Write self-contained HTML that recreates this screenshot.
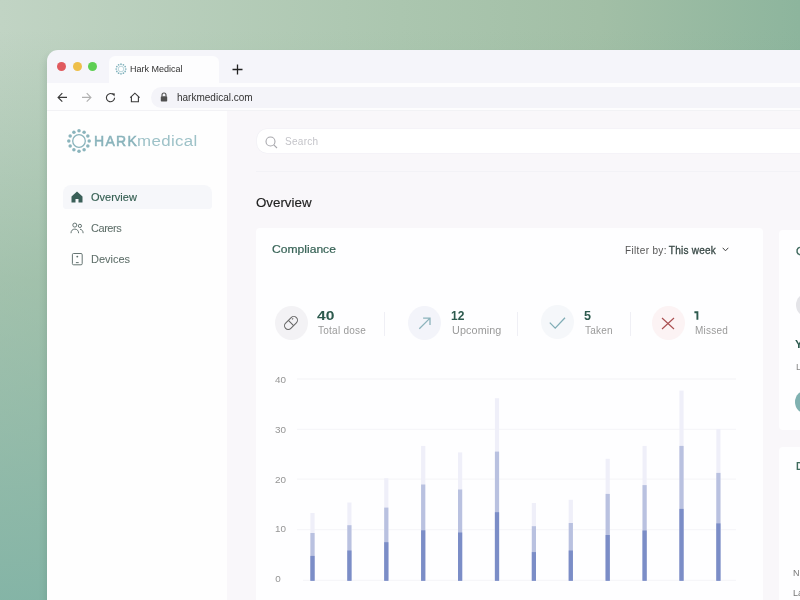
<!DOCTYPE html>
<html><head><meta charset="utf-8">
<style>
*{margin:0;padding:0;box-sizing:border-box}
html,body{width:800px;height:600px;overflow:hidden}
body{position:relative;font-family:"Liberation Sans",sans-serif;background:linear-gradient(to bottom,rgba(120,168,140,0) 5%,rgba(120,168,140,0.42) 47%,rgba(126,177,163,0.9) 100%),linear-gradient(to right,#c1d4c4 0%,#abc6af 50%,#a2bfa6 75%,#8db59d 100%)}
.a{position:absolute}
.t{position:absolute;white-space:nowrap;line-height:1;will-change:transform}
.dot{position:absolute;width:9px;height:9px;border-radius:50%}
</style></head><body>
<!-- window -->
<div class="a" style="left:47px;top:50px;width:760px;height:560px;background:#f5f5fa;border-radius:11px 0 0 0;box-shadow:-2px 5px 6px rgba(40,80,60,0.13);overflow:hidden"></div>
<div class="dot" style="left:57.1px;top:62.1px;width:9.2px;height:9.2px;background:#e05a5e"></div>
<div class="dot" style="left:72.6px;top:62.1px;width:9.2px;height:9.2px;background:#eebf4a"></div>
<div class="dot" style="left:88.1px;top:62.1px;width:9.2px;height:9.2px;background:#5ecf53"></div>
<!-- tab -->
<div class="a" style="left:109px;top:56px;width:110px;height:27px;background:#fdfdfe;border-radius:6px 6px 0 0"></div>
<svg class="a" style="left:114.7px;top:63px" width="12" height="12" viewBox="0 0 12 12"><g fill="#80b2bc"><circle cx="10.80" cy="6.00" r="0.85"/><circle cx="10.16" cy="8.40" r="0.85"/><circle cx="8.40" cy="10.16" r="0.85"/><circle cx="6.00" cy="10.80" r="0.85"/><circle cx="3.60" cy="10.16" r="0.85"/><circle cx="1.84" cy="8.40" r="0.85"/><circle cx="1.20" cy="6.00" r="0.85"/><circle cx="1.84" cy="3.60" r="0.85"/><circle cx="3.60" cy="1.84" r="0.85"/><circle cx="6.00" cy="1.20" r="0.85"/><circle cx="8.40" cy="1.84" r="0.85"/><circle cx="10.16" cy="3.60" r="0.85"/></g><circle cx="6" cy="6" r="2.8" fill="none" stroke="#9cc4cc" stroke-width="0.7"/></svg>
<div class="t" style="left:129.5px;top:65px;font-size:9px;color:#333">Hark Medical</div>
<svg class="a" style="left:232px;top:64px" width="11" height="11" viewBox="0 0 11 11"><path d="M5.5 0.5V10.5M0.5 5.5H10.5" stroke="#222" stroke-width="1.3"/></svg>
<!-- toolbar -->
<div class="a" style="left:47px;top:82.5px;width:760px;height:28.7px;background:#fdfdfe"></div>
<svg class="a" style="left:57px;top:92px" width="11" height="11" viewBox="0 0 11 11"><path d="M10 5.4H1.2M5.3 1.2L1.1 5.4L5.3 9.6" fill="none" stroke="#3a3a3a" stroke-width="1.15"/></svg>
<svg class="a" style="left:81px;top:92px" width="11" height="11" viewBox="0 0 11 11"><path d="M1 5.4H9.8M5.7 1.2L9.9 5.4L5.7 9.6" fill="none" stroke="#b0b0b0" stroke-width="1.15"/></svg>
<svg class="a" style="left:105px;top:92px" width="11" height="11" viewBox="0 0 11 11"><path d="M9.6 5.8A4.1 4.1 0 1 1 7.9 2.3" fill="none" stroke="#3a3a3a" stroke-width="1.1"/><path d="M6.6 1.2L9.9 1.4L9.4 4.6Z" fill="#3a3a3a"/></svg>
<svg class="a" style="left:129px;top:92px" width="12" height="11" viewBox="0 0 12 11"><path d="M1.2 5.6L5.9 1.2L10.6 5.6M2.4 4.5V9.7H9.4V4.5" fill="none" stroke="#3a3a3a" stroke-width="1.1" stroke-linejoin="miter"/></svg>
<div class="a" style="left:151px;top:86.6px;width:660px;height:21.4px;background:#f4f4f9;border-radius:11px"></div>
<svg class="a" style="left:160px;top:92px" width="8" height="10" viewBox="0 0 8 10"><path d="M2 4.5V3A2 2 0 0 1 6 3V4.5" fill="none" stroke="#505050" stroke-width="1.1"/><rect x="0.8" y="4.3" width="6.4" height="5.2" rx="0.8" fill="#505050"/></svg>
<div class="t" style="left:177px;top:93px;font-size:10px;color:#333">harkmedical.com</div>
<!-- content -->
<div class="a" style="left:47px;top:110.2px;width:760px;height:1px;background:#f2f2f5"></div>
<div class="a" style="left:47px;top:111.2px;width:180.2px;height:500px;background:#fefefe"></div>
<div class="a" style="left:227.2px;top:111.2px;width:580px;height:500px;background:#f9f7fa"></div>

<!-- logo -->
<svg class="a" style="left:66px;top:128px" width="26" height="26" viewBox="0 0 26 26" id="logoicon"><g fill="#8ab4bc"><circle cx="23.20" cy="13.00" r="1.75"/><circle cx="21.83" cy="18.10" r="1.75"/><circle cx="18.10" cy="21.83" r="1.75"/><circle cx="13.00" cy="23.20" r="1.75"/><circle cx="7.90" cy="21.83" r="1.75"/><circle cx="4.17" cy="18.10" r="1.75"/><circle cx="2.80" cy="13.00" r="1.75"/><circle cx="4.17" cy="7.90" r="1.75"/><circle cx="7.90" cy="4.17" r="1.75"/><circle cx="13.00" cy="2.80" r="1.75"/><circle cx="18.10" cy="4.17" r="1.75"/><circle cx="21.83" cy="7.90" r="1.75"/></g><circle cx="13" cy="13" r="6.3" fill="none" stroke="#8ab4bc" stroke-width="1.3"/></svg>
<div class="t" style="left:94px;top:134px;font-size:14px;color:#89b3bb;-webkit-text-stroke:0.5px #89b3bb;letter-spacing:1.3px;transform:scaleX(1.0);transform-origin:0 0">HARK</div>
<div class="t" style="left:137px;top:133.5px;font-size:14px;color:#9ec2c8;letter-spacing:0.3px;transform:scaleX(1.205);transform-origin:0 0">medical</div>

<!-- nav -->
<div class="a" style="left:63px;top:185px;width:149px;height:24px;background:#f6f7fa;border-radius:8px 8px 3px 3px"></div>
<svg class="a" style="left:71px;top:191px" width="12" height="12" viewBox="0 0 12 12"><path d="M6 0.5L11.5 5.5V11.5H7.5V8H4.5V11.5H0.5V5.5Z" fill="#3a5f58"/></svg>
<div class="t" style="left:91px;top:192px;font-size:11px;color:#355f52;-webkit-text-stroke:0.15px #355f52">Overview</div>
<svg class="a" style="left:70px;top:222px" width="14" height="12" viewBox="0 0 14 12"><g fill="none" stroke="#5e6e6b" stroke-width="0.95"><circle cx="4.8" cy="3.1" r="2"/><circle cx="9.9" cy="3.9" r="1.6"/><path d="M1 11.2C1 8.6 2.6 7.1 4.8 7.1S8.6 8.6 8.6 11.2M10 7.3C11.9 7.4 13.1 8.9 13.1 11.2"/></g></svg>
<div class="t" style="left:91px;top:223px;font-size:11px;color:#5f6f6a;letter-spacing:-0.45px;-webkit-text-stroke:0.05px #5f6f6a">Carers</div>
<svg class="a" style="left:71px;top:252px" width="12" height="14" viewBox="0 0 12 14"><g fill="none" stroke="#5e6e6b" stroke-width="0.95"><rect x="1.4" y="1.5" width="9.8" height="11.3" rx="1.2"/><path d="M4.9 10.6H7.7"/></g><circle cx="6.3" cy="4.6" r="0.95" fill="#5e6e6b"/></svg>
<div class="t" style="left:90.5px;top:254px;font-size:11px;color:#5f6f6a;-webkit-text-stroke:0.05px #5f6f6a">Devices</div>

<!-- search -->
<div class="a" style="left:257px;top:129px;width:560px;height:23.8px;background:#ffffff;border-radius:10px;box-shadow:0 0 0 0.6px #f1f0f5"></div>
<svg class="a" style="left:265px;top:135.5px" width="13" height="13" viewBox="0 0 13 13"><g fill="none" stroke="#a8a8ad" stroke-width="1.1"><circle cx="5.5" cy="5.5" r="4.5"/><path d="M8.8 8.8L12 12"/></g></svg>
<div class="t" style="left:285px;top:137px;font-size:10px;color:#c4c4c9;letter-spacing:0.3px">Search</div>
<div class="a" style="left:256px;top:170.7px;width:560px;height:1.6px;background:#f3f2f6"></div>

<div class="t" style="left:256px;top:197px;font-size:12px;color:#222;-webkit-text-stroke:0.15px #222;transform:scaleX(1.11);transform-origin:0 0">Overview</div>

<!-- compliance card -->
<div class="a" style="left:255.7px;top:227.7px;width:507.3px;height:380px;background:#fefeff;border-radius:4px"></div>
<div class="t" style="left:272px;top:243.5px;font-size:11px;color:#356155;-webkit-text-stroke:0.2px #356155;transform:scaleX(1.1);transform-origin:0 0">Compliance</div>
<div class="t" style="left:624.5px;top:245.5px;font-size:10px;color:#555;letter-spacing:0.35px">Filter by: <span style="color:#3a4a48;-webkit-text-stroke:0.3px #3a4a48;letter-spacing:0.25px;margin-left:-1.2px">This week</span></div>
<svg class="a" style="left:722px;top:247px" width="7" height="5" viewBox="0 0 7 5"><path d="M0.7 0.8L3.5 3.8L6.3 0.8" fill="none" stroke="#444" stroke-width="1"/></svg>

<!-- stats -->
<div class="a" style="left:274.5px;top:306px;width:33px;height:34px;border-radius:50%;background:#f3f2f5"></div>
<svg class="a" style="left:282px;top:314.3px" width="18" height="18" viewBox="0 0 18 18"><g fill="none" stroke="#666" stroke-width="1.05"><rect x="1.4" y="5.3" width="15.2" height="7.4" rx="3.7" transform="rotate(-45 9 9)"/><path d="M6.4 6.4L11.6 11.6M10 5.4L11.2 4.3" /></g></svg>
<div class="t" style="left:317px;top:310px;font-size:12px;font-weight:bold;color:#2d5a4e;transform:scaleX(1.3);transform-origin:0 0">40</div>
<div class="t" style="left:317.5px;top:325.5px;font-size:10px;color:#9a9a9a;letter-spacing:0.25px">Total dose</div>

<div class="a" style="left:384px;top:312px;width:1px;height:24px;background:#efeff5"></div>
<div class="a" style="left:408px;top:306px;width:33px;height:34px;border-radius:50%;background:#f3f4fa"></div>
<svg class="a" style="left:417px;top:315px" width="16" height="16" viewBox="0 0 16 16"><path d="M2.3 13.8L13 3.1M6.1 3.1H13V10" fill="none" stroke="#8cb3bc" stroke-width="1.3"/></svg>
<div class="t" style="left:451px;top:310px;font-size:12px;font-weight:bold;color:#2d5a4e">12</div>
<div class="t" style="left:451.5px;top:325.5px;font-size:10px;color:#9a9a9a;letter-spacing:0.1px;transform:scaleX(1.08);transform-origin:0 0">Upcoming</div>

<div class="a" style="left:517px;top:312px;width:1px;height:24px;background:#efeff5"></div>
<div class="a" style="left:541px;top:305px;width:33px;height:34px;border-radius:50%;background:#f5f7fa"></div>
<svg class="a" style="left:548px;top:315px" width="18" height="15" viewBox="0 0 18 15"><path d="M1.8 7.6L7.2 13.1L17 2.8" fill="none" stroke="#80adb6" stroke-width="1.3"/></svg>
<div class="t" style="left:584px;top:310px;font-size:12px;font-weight:bold;color:#2d5a4e;transform:scaleX(1.05);transform-origin:0 0">5</div>
<div class="t" style="left:584.5px;top:325.5px;font-size:10px;color:#9a9a9a;letter-spacing:0.25px">Taken</div>

<div class="a" style="left:630px;top:312px;width:1px;height:24px;background:#efeff5"></div>
<div class="a" style="left:652px;top:306px;width:33px;height:34px;border-radius:50%;background:#fcf3f4"></div>
<svg class="a" style="left:661px;top:317px" width="14" height="13" viewBox="0 0 14 13"><path d="M1 1L13 12M13 1L1 12" fill="none" stroke="#aa5052" stroke-width="1.15"/></svg>
<svg class="a" style="left:690px;top:305px" width="15" height="20" viewBox="690 305 15 20"><path d="M694.4 312.2H697.4V319.8" fill="none" stroke="#2d5a4e" stroke-width="1.9"/></svg>
<div class="t" style="left:695px;top:325.5px;font-size:10px;color:#9a9a9a;letter-spacing:0.25px">Missed</div>

<!-- chart -->
<svg class="a" style="left:0;top:0" width="800" height="600" viewBox="0 0 800 600" id="chart">
  <g stroke="#f6f6f9" stroke-width="1.3"><path d="M297 379H736M297 429.4H736M297 479.2H736M297 529.6H736M303 580.4H736"/></g>
  <g font-family="Liberation Sans" font-size="9" fill="#959595" transform="translate(275 0) scale(1.1 1)"><text x="0" y="382.8">40</text><text x="0" y="432.8">30</text><text x="0" y="482.8">20</text><text x="0" y="531.9">10</text><text x="0.3" y="581.8">0</text></g>
  <g id="bars"><rect x="310.4" y="513.0" width="4.2" height="67.8" fill="#efeff9"/><rect x="310.4" y="533.0" width="4.2" height="47.8" fill="#b9c1e0"/><rect x="310.4" y="555.9" width="4.2" height="24.9" fill="#7b8dc7"/><rect x="347.3" y="502.5" width="4.2" height="78.3" fill="#efeff9"/><rect x="347.3" y="525.2" width="4.2" height="55.6" fill="#b9c1e0"/><rect x="347.3" y="550.5" width="4.2" height="30.3" fill="#7b8dc7"/><rect x="384.2" y="478.2" width="4.2" height="102.6" fill="#efeff9"/><rect x="384.2" y="507.6" width="4.2" height="73.2" fill="#b9c1e0"/><rect x="384.2" y="542.2" width="4.2" height="38.6" fill="#7b8dc7"/><rect x="421.1" y="445.9" width="4.2" height="134.9" fill="#efeff9"/><rect x="421.1" y="484.5" width="4.2" height="96.3" fill="#b9c1e0"/><rect x="421.1" y="530.3" width="4.2" height="50.5" fill="#7b8dc7"/><rect x="458.0" y="452.4" width="4.2" height="128.4" fill="#efeff9"/><rect x="458.0" y="489.5" width="4.2" height="91.3" fill="#b9c1e0"/><rect x="458.0" y="532.5" width="4.2" height="48.3" fill="#7b8dc7"/><rect x="494.9" y="398.2" width="4.2" height="182.6" fill="#efeff9"/><rect x="494.9" y="451.6" width="4.2" height="129.2" fill="#b9c1e0"/><rect x="494.9" y="512.2" width="4.2" height="68.6" fill="#7b8dc7"/><rect x="531.8" y="503.0" width="4.2" height="77.8" fill="#efeff9"/><rect x="531.8" y="526.2" width="4.2" height="54.6" fill="#b9c1e0"/><rect x="531.8" y="552.1" width="4.2" height="28.7" fill="#7b8dc7"/><rect x="568.7" y="499.8" width="4.2" height="81.0" fill="#efeff9"/><rect x="568.7" y="523.0" width="4.2" height="57.8" fill="#b9c1e0"/><rect x="568.7" y="550.5" width="4.2" height="30.3" fill="#7b8dc7"/><rect x="605.6" y="458.8" width="4.2" height="122.0" fill="#efeff9"/><rect x="605.6" y="493.9" width="4.2" height="86.9" fill="#b9c1e0"/><rect x="605.6" y="535.0" width="4.2" height="45.8" fill="#7b8dc7"/><rect x="642.5" y="445.9" width="4.2" height="134.9" fill="#efeff9"/><rect x="642.5" y="485.1" width="4.2" height="95.7" fill="#b9c1e0"/><rect x="642.5" y="530.5" width="4.2" height="50.3" fill="#7b8dc7"/><rect x="679.4" y="390.6" width="4.2" height="190.2" fill="#efeff9"/><rect x="679.4" y="445.9" width="4.2" height="134.9" fill="#b9c1e0"/><rect x="679.4" y="508.9" width="4.2" height="71.9" fill="#7b8dc7"/><rect x="716.3" y="429.1" width="4.2" height="151.7" fill="#efeff9"/><rect x="716.3" y="472.9" width="4.2" height="107.9" fill="#b9c1e0"/><rect x="716.3" y="523.4" width="4.2" height="57.4" fill="#7b8dc7"/></g>
</svg>

<!-- right cards -->
<div class="a" style="left:779px;top:229.8px;width:40px;height:200.2px;background:#fefeff;border-radius:4px"></div>
<div class="t" style="left:795.5px;top:245.5px;font-size:11px;color:#356155;-webkit-text-stroke:0.3px #356155">C</div>
<div class="a" style="left:796px;top:293px;width:24px;height:24px;border-radius:50%;background:#e4e4e8"></div>
<div class="t" style="left:795px;top:339px;font-size:11.5px;font-weight:bold;color:#2d5a4e">Y</div>
<div class="t" style="left:795.5px;top:362px;font-size:9.5px;color:#888">L</div>
<div class="a" style="left:794.7px;top:389.6px;width:24px;height:24px;border-radius:50%;background:#80b1b1"></div>
<div class="a" style="left:779px;top:446.5px;width:40px;height:200px;background:#fefeff;border-radius:4px"></div>
<div class="t" style="left:796px;top:462px;font-size:10px;font-weight:bold;color:#3e6a5c">D</div>
<div class="t" style="left:793px;top:569px;font-size:9px;color:#777">N</div>
<div class="t" style="left:793px;top:589px;font-size:9px;color:#777">La</div>
</body></html>
